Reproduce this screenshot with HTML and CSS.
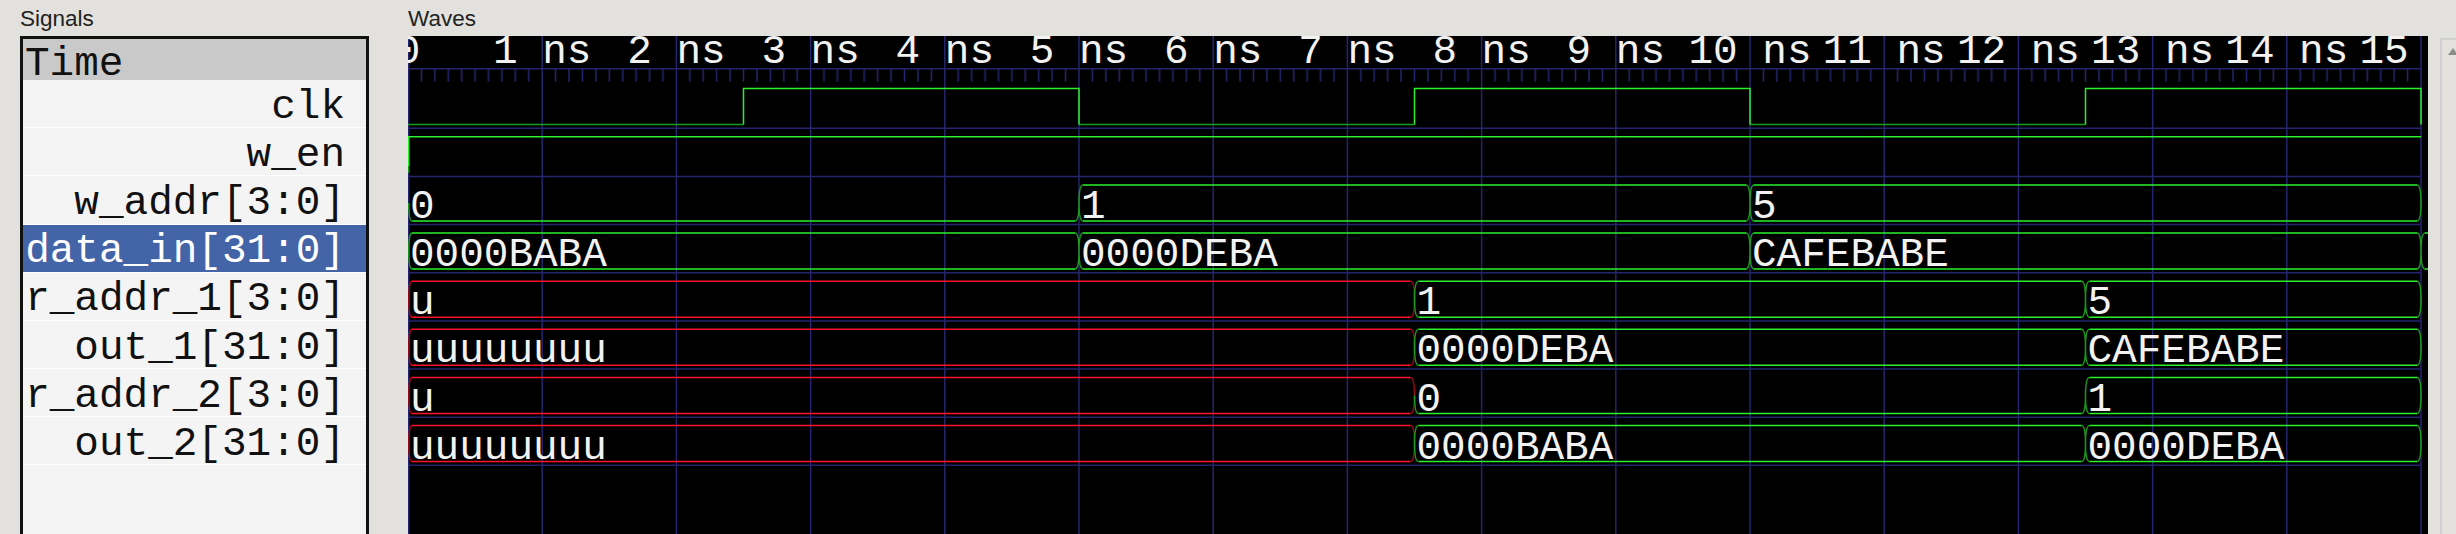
FILE: index.html
```html
<!DOCTYPE html>
<html lang="en">
<head>
<meta charset="utf-8">
<title>Signals / Waves</title>
<link rel="stylesheet" href="styles.css">
</head>
<body>
<div class="app">
  <section class="signals-pane">
    <div class="pane-title">Signals</div>
    <div class="signal-list">
      <div class="sig-head">Time</div>
      <div class="sig-row">clk</div>
      <div class="sig-row">w_en</div>
      <div class="sig-row">w_addr[3:0]</div>
      <div class="sig-row selected">data_in[31:0]</div>
      <div class="sig-row">r_addr_1[3:0]</div>
      <div class="sig-row">out_1[31:0]</div>
      <div class="sig-row">r_addr_2[3:0]</div>
      <div class="sig-row">out_2[31:0]</div>
    </div>
  </section>
  <section class="waves-pane">
    <div class="pane-title">Waves</div>
    <svg class="wave-canvas" width="2020" height="498" viewBox="0 0 2020 498" xmlns="http://www.w3.org/2000/svg">
      <defs>
        <pattern id="ticks" patternUnits="userSpaceOnUse" x="0" y="32.7" width="134.2" height="13">
          <path class="grid" d="M13.42 0V13M26.84 0V13M40.26 0V13M53.68 0V13M67.1 0V13M80.52 0V13M93.94 0V13M107.36 0V13M120.78 0V13"/>
        </pattern>
        <clipPath id="hclip">
          <rect x="0" y="-40" width="2020" height="538"/>
        </clipPath>
      </defs>
      <g clip-path="url(#hclip)">
      <!-- grid -->
      <path class="grid" d="M0.7 0V498M134.2 0V498M268.4 0V498M402.6 0V498M536.8 0V498M671 0V498M805.2 0V498M939.4 0V498M1073.6 0V498M1207.8 0V498M1342 0V498M1476.2 0V498M1610.4 0V498M1744.6 0V498M1878.8 0V498M2013 0V498"/>
      <path class="grid" d="M0 32.7H2013M0 92.3H2013M0 140.45H2013M0 188.6H2013M0 236.75H2013M0 284.9H2013M0 333.05H2013M0 381.2H2013M0 429.35H2013"/>
      <rect x="0" y="32.7" width="2013" height="13" fill="url(#ticks)"/>

      <!-- ruler labels -->
      <g class="txt ruler">
        <text x="0" y="27.3">0</text>
        <text x="134.2" y="27.3">1 ns</text>
        <text x="268.4" y="27.3">2 ns</text>
        <text x="402.6" y="27.3">3 ns</text>
        <text x="536.8" y="27.3">4 ns</text>
        <text x="671" y="27.3">5 ns</text>
        <text x="805.2" y="27.3">6 ns</text>
        <text x="939.4" y="27.3">7 ns</text>
        <text x="1073.6" y="27.3">8 ns</text>
        <text x="1207.8" y="27.3">9 ns</text>
        <text x="1342" y="27.3">10 ns</text>
        <text x="1476.2" y="27.3">11 ns</text>
        <text x="1610.4" y="27.3">12 ns</text>
        <text x="1744.6" y="27.3">13 ns</text>
        <text x="1878.8" y="27.3">14 ns</text>
        <text x="2013" y="27.3">15 ns</text>
      </g>

      <!-- clk -->
      <path class="gd" d="M0 88.6H335.5M671 88.6H1006.5M1342 88.6H1677.5"/>
      <path class="g" d="M335.5 88.6V52.6H671V88.6M1006.5 88.6V52.6H1342V88.6M1677.5 88.6V52.6H2013V88.6"/>

      <!-- w_en -->
      <path class="gd" d="M0.7 136.7V130"/>
      <path class="g" d="M0.7 130V100.7H2013"/>

      <!-- w_addr -->
      <path class="g" d="M4 184.9H667M675 148.9H1338M675 184.9H1338M1346 148.9H2009M1346 184.9H2009"/>
      <path class="gd" d="M0.8 166.9Q0.8 184.9 4 184.9M667 184.9Q671 184.9 671 166.9M675 148.9Q671 148.9 671 166.9Q671 184.9 675 184.9M1338 148.9Q1342 148.9 1342 166.9Q1342 184.9 1338 184.9M1346 148.9Q1342 148.9 1342 166.9Q1342 184.9 1346 184.9M2009 148.9Q2013 148.9 2013 166.9Q2013 184.9 2009 184.9"/>

      <!-- data_in -->
      <path class="g" d="M4 197H667M4 233H667M675 197H1338M675 233H1338M1346 197H2009M1346 233H2009M2017 197H2020M2017 233H2020"/>
      <path class="gd" d="M4 197Q0.8 197 0.8 215Q0.8 233 4 233M667 197Q671 197 671 215Q671 233 667 233M675 197Q671 197 671 215Q671 233 675 233M1338 197Q1342 197 1342 215Q1342 233 1338 233M1346 197Q1342 197 1342 215Q1342 233 1346 233M2009 197Q2013 197 2013 215Q2013 233 2009 233M2017 197Q2013 197 2013 215Q2013 233 2017 233"/>

      <!-- r_addr_1 -->
      <path class="r" d="M4 245.2H1002.5M4 281.2H1002.5"/>
      <path class="rd" d="M4 245.2Q0.8 245.2 0.8 263.2Q0.8 281.2 4 281.2M1002.5 245.2Q1006.5 245.2 1006.5 263.2Q1006.5 281.2 1002.5 281.2"/>
      <path class="g" d="M1010.5 245.2H1673.5M1010.5 281.2H1673.5M1681.5 245.2H2009M1681.5 281.2H2009"/>
      <path class="gd" d="M1010.5 245.2Q1006.5 245.2 1006.5 263.2Q1006.5 281.2 1010.5 281.2M1673.5 245.2Q1677.5 245.2 1677.5 263.2Q1677.5 281.2 1673.5 281.2M1681.5 245.2Q1677.5 245.2 1677.5 263.2Q1677.5 281.2 1681.5 281.2M2009 245.2Q2013 245.2 2013 263.2Q2013 281.2 2009 281.2"/>

      <!-- out_1 -->
      <path class="r" d="M4 293.3H1002.5M4 329.3H1002.5"/>
      <path class="rd" d="M4 293.3Q0.8 293.3 0.8 311.3Q0.8 329.3 4 329.3M1002.5 293.3Q1006.5 293.3 1006.5 311.3Q1006.5 329.3 1002.5 329.3"/>
      <path class="g" d="M1010.5 293.3H1673.5M1010.5 329.3H1673.5M1681.5 293.3H2009M1681.5 329.3H2009"/>
      <path class="gd" d="M1010.5 293.3Q1006.5 293.3 1006.5 311.3Q1006.5 329.3 1010.5 329.3M1673.5 293.3Q1677.5 293.3 1677.5 311.3Q1677.5 329.3 1673.5 329.3M1681.5 293.3Q1677.5 293.3 1677.5 311.3Q1677.5 329.3 1681.5 329.3M2009 293.3Q2013 293.3 2013 311.3Q2013 329.3 2009 329.3"/>

      <!-- r_addr_2 -->
      <path class="r" d="M4 341.5H1002.5M4 377.5H1002.5"/>
      <path class="rd" d="M4 341.5Q0.8 341.5 0.8 359.5Q0.8 377.5 4 377.5M1002.5 341.5Q1006.5 341.5 1006.5 359.5Q1006.5 377.5 1002.5 377.5"/>
      <path class="g" d="M1010.5 377.5H1673.5M1681.5 341.5H2009M1681.5 377.5H2009"/>
      <path class="gd" d="M1006.5 359.5Q1006.5 377.5 1010.5 377.5M1673.5 377.5Q1677.5 377.5 1677.5 359.5M1681.5 341.5Q1677.5 341.5 1677.5 359.5Q1677.5 377.5 1681.5 377.5M2009 341.5Q2013 341.5 2013 359.5Q2013 377.5 2009 377.5"/>

      <!-- out_2 -->
      <path class="r" d="M4 389.6H1002.5M4 425.6H1002.5"/>
      <path class="rd" d="M4 389.6Q0.8 389.6 0.8 407.6Q0.8 425.6 4 425.6M1002.5 389.6Q1006.5 389.6 1006.5 407.6Q1006.5 425.6 1002.5 425.6"/>
      <path class="g" d="M1010.5 389.6H1673.5M1010.5 425.6H1673.5M1681.5 389.6H2009M1681.5 425.6H2009"/>
      <path class="gd" d="M1010.5 389.6Q1006.5 389.6 1006.5 407.6Q1006.5 425.6 1010.5 425.6M1673.5 389.6Q1677.5 389.6 1677.5 407.6Q1677.5 425.6 1673.5 425.6M1681.5 389.6Q1677.5 389.6 1677.5 407.6Q1677.5 425.6 1681.5 425.6M2009 389.6Q2013 389.6 2013 407.6Q2013 425.6 2009 425.6"/>

      <!-- values -->
      <g class="txt">
        <text x="2" y="182">0</text>
        <text x="673" y="182">1</text>
        <text x="1344" y="182">5</text>
        <text x="2" y="230.1">0000BABA</text>
        <text x="673" y="230.1">0000DEBA</text>
        <text x="1344" y="230.1">CAFEBABE</text>
        <text x="2" y="278.3">u</text>
        <text x="1008.5" y="278.3">1</text>
        <text x="1679.5" y="278.3">5</text>
        <text x="2" y="326.4">uuuuuuuu</text>
        <text x="1008.5" y="326.4">0000DEBA</text>
        <text x="1679.5" y="326.4">CAFEBABE</text>
        <text x="2" y="374.6">u</text>
        <text x="1008.5" y="374.6">0</text>
        <text x="1679.5" y="374.6">1</text>
        <text x="2" y="422.7">uuuuuuuu</text>
        <text x="1008.5" y="422.7">0000BABA</text>
        <text x="1679.5" y="422.7">0000DEBA</text>
      </g>
      </g>
    </svg>
  </section>
  <div class="vscroll"><span class="scroll-arrow"></span></div>
</div>
</body>
</html>
```

FILE: styles.css
```css
html, body {
  margin: 0;
  padding: 0;
  background: #e2e1dd;
}

body {
  width: 2456px;
  height: 534px;
  overflow: hidden;
  font-family: "Liberation Sans", Arial, sans-serif;
}

.app {
  display: flex;
  height: 534px;
  padding-left: 20px;
  box-sizing: border-box;
}

.signals-pane {
  flex: none;
  width: 349px;
  display: flex;
  flex-direction: column;
}

.pane-title {
  flex: none;
  height: 36px;
  box-sizing: border-box;
  padding-top: 1px;
  line-height: 35px;
  font-size: 22.5px;
  color: #222;
  white-space: nowrap;
}

.signal-list {
  flex: 1;
  border: 3px solid #111;
  border-bottom: 0;
  background: #f4f4f4;
  font-family: "Liberation Mono", "Courier New", monospace;
  font-size: 41px;
  color: #111;
}

.sig-head {
  height: 41.2px;
  box-sizing: border-box;
  padding: 10px 0 0 2px;
  line-height: 31.2px;
  background: #c9c9c9;
}

.sig-row {
  height: 48.15px;
  box-sizing: border-box;
  padding: 7.7px 21px 0 0;
  line-height: 38.95px;
  text-align: right;
  white-space: pre;
  border-bottom: 1.5px solid #ffffff;
}

.sig-row.selected {
  background: #4464a8;
  color: #ffffff;
}

.waves-pane {
  flex: none;
  width: 2020px;
  margin-left: 39px;
  display: flex;
  flex-direction: column;
}

.wave-canvas {
  display: block;
  width: 2020px;
  height: 498px;
  background: #000;
  overflow: visible;
}

.wave-canvas path {
  fill: none;
  stroke-width: 1.5;
}

.wave-canvas .grid {
  stroke: #25256f;
}

.wave-canvas .g {
  stroke: #2cf02c;
}

.wave-canvas .gd {
  stroke: #1a9a1a;
}

.wave-canvas .r {
  stroke: #ff1428;
}

.wave-canvas .rd {
  stroke: #9a0c14;
}

.wave-canvas .txt {
  font-family: "Liberation Mono", "Courier New", monospace;
  font-size: 41px;
  fill: #f2f2f2;
}

.wave-canvas .ruler {
  text-anchor: middle;
}

.vscroll {
  flex: none;
  width: 16px;
  margin: 38px 0 0 12px;
  border-left: 2px solid #cfcfcf;
  border-top: 2px solid #cfcfcf;
  box-sizing: border-box;
}

.scroll-arrow {
  display: block;
  width: 0;
  height: 0;
  margin: 8px 0 0 6px;
  border-left: 5px solid transparent;
  border-right: 5px solid transparent;
  border-bottom: 7px solid #8c8c8c;
}
```
